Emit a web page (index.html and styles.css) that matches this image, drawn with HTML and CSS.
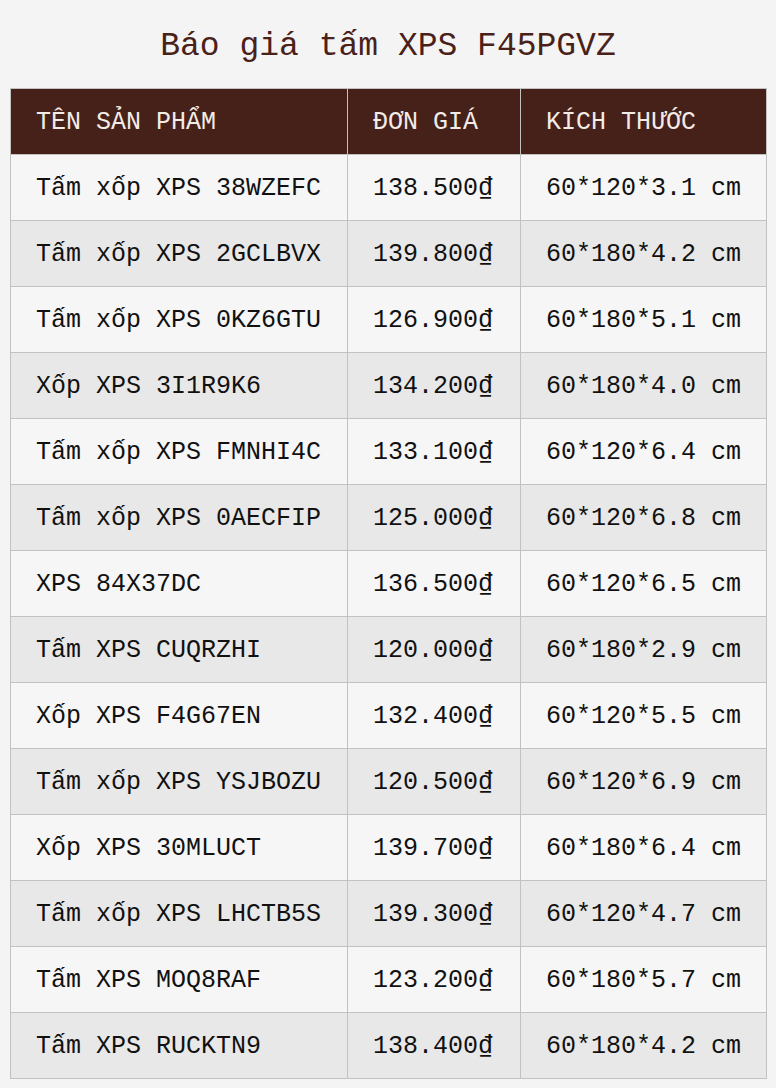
FILE: index.html
```html
<!DOCTYPE html>
<html lang="vi">
<head>
<meta charset="utf-8">
<title>Báo giá tấm XPS F45PGVZ</title>
<link rel="stylesheet" href="styles.css">
</head>
<body>
<h1 class="title">Báo giá tấm XPS F45PGVZ</h1>
<table class="price-table">
  <colgroup>
    <col class="c-name">
    <col class="c-price">
    <col class="c-size">
  </colgroup>
  <thead>
    <tr><th>TÊN SẢN PHẨM</th><th>ĐƠN GIÁ</th><th>KÍCH THƯỚC</th></tr>
  </thead>
  <tbody>
    <tr><td>Tấm xốp XPS 38WZEFC</td><td>138.500₫</td><td>60*120*3.1 cm</td></tr>
    <tr><td>Tấm xốp XPS 2GCLBVX</td><td>139.800₫</td><td>60*180*4.2 cm</td></tr>
    <tr><td>Tấm xốp XPS 0KZ6GTU</td><td>126.900₫</td><td>60*180*5.1 cm</td></tr>
    <tr><td>Xốp XPS 3I1R9K6</td><td>134.200₫</td><td>60*180*4.0 cm</td></tr>
    <tr><td>Tấm xốp XPS FMNHI4C</td><td>133.100₫</td><td>60*120*6.4 cm</td></tr>
    <tr><td>Tấm xốp XPS 0AECFIP</td><td>125.000₫</td><td>60*120*6.8 cm</td></tr>
    <tr><td>XPS 84X37DC</td><td>136.500₫</td><td>60*120*6.5 cm</td></tr>
    <tr><td>Tấm XPS CUQRZHI</td><td>120.000₫</td><td>60*180*2.9 cm</td></tr>
    <tr><td>Xốp XPS F4G67EN</td><td>132.400₫</td><td>60*120*5.5 cm</td></tr>
    <tr><td>Tấm xốp XPS YSJBOZU</td><td>120.500₫</td><td>60*120*6.9 cm</td></tr>
    <tr><td>Xốp XPS 30MLUCT</td><td>139.700₫</td><td>60*180*6.4 cm</td></tr>
    <tr><td>Tấm xốp XPS LHCTB5S</td><td>139.300₫</td><td>60*120*4.7 cm</td></tr>
    <tr><td>Tấm XPS MOQ8RAF</td><td>123.200₫</td><td>60*180*5.7 cm</td></tr>
    <tr><td>Tấm XPS RUCKTN9</td><td>138.400₫</td><td>60*180*4.2 cm</td></tr>
  </tbody>
</table>
</body>
</html>
```
FILE: styles.css
```css
html, body {
  background: #f4f4f4;
}
body {
  margin: 0;
  padding: 0 10px 10px;
  font-family: "Liberation Mono", "DejaVu Sans Mono", monospace;
  color: #111;
}
.title {
  margin: 23px 0 17px;
  height: 48px;
  line-height: 48px;
  font-size: 33px;
  font-weight: normal;
  text-align: center;
  color: #4a2119;
}
.price-table {
  width: 756px;
  border-collapse: collapse;
  table-layout: fixed;
  font-size: 25px;
}
.c-name { width: 337px; }
.c-price { width: 173px; }
.c-size { width: 246px; }
.price-table th,
.price-table td {
  height: 63px;
  padding: 2px 0 0 25px;
  border: 1px solid #c2c2c2;
  text-align: left;
  vertical-align: middle;
  white-space: nowrap;
  line-height: 30px;
}
.price-table th {
  background: #45211a;
  color: #f3ebe6;
  font-weight: normal;
}
.price-table tbody tr:nth-child(odd) td { background: #f6f6f6; }
.price-table tbody tr:nth-child(even) td { background: #e8e8e8; }
```
